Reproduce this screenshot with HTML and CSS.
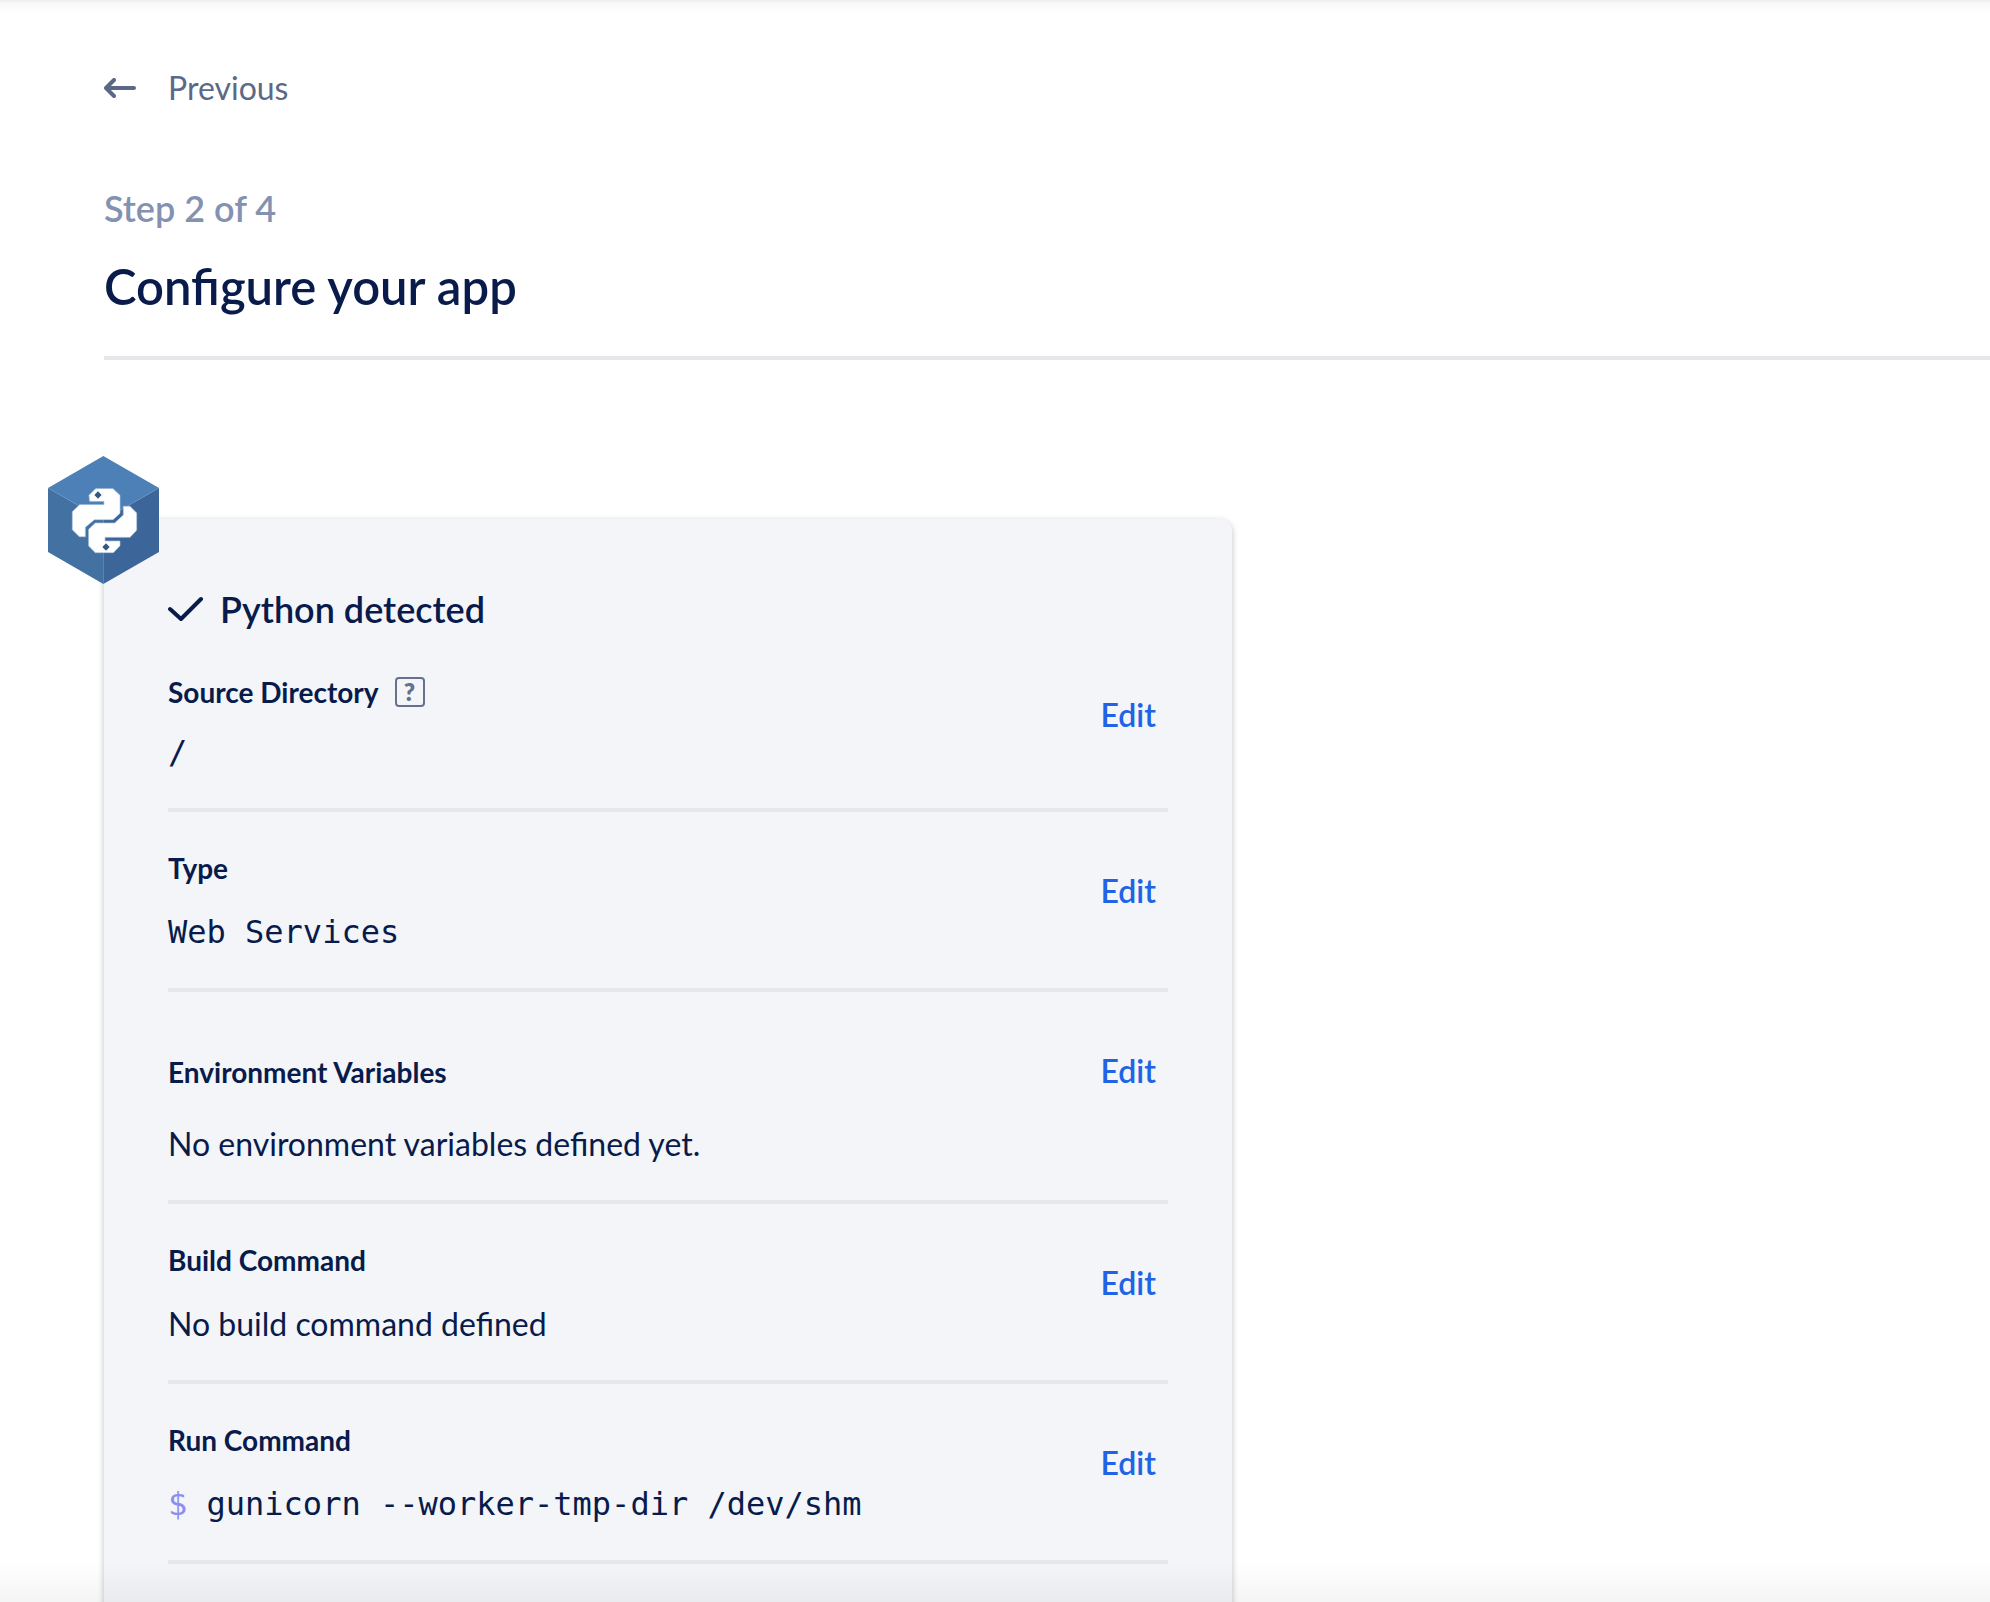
FILE: index.html
```html
<!DOCTYPE html>
<html lang="en">
<head>
<meta charset="utf-8">
<meta name="viewport" content="width=device-width, initial-scale=1">
<title>Configure your app</title>
<link rel="stylesheet" href="styles.css">
</head>
<body>
<main class="page">
  <header class="page-header">
    <a class="back" href="#">
      <svg class="back-icon" viewBox="0 0 32 20" aria-hidden="true"><path d="M10 2 2 10l8 8M2 10h28"/></svg>
      Previous
    </a>
    <p class="step">Step 2 of 4</p>
    <h1 class="title">Configure your app</h1>
  </header>

  <section class="card">
    <svg class="badge" viewBox="24 48 333 384" role="img" aria-label="Python">
      <path fill="#4372a2" d="M24 144 190 240V432L24 336z"/>
      <path fill="#3c659a" d="M357 144 190 240V432L357 336z"/>
      <path fill="#4d80b7" d="M190 48 357 144 190 240 24 144z"/>
      <g fill="#fff" stroke="#b5c9de" stroke-width="2">
        <path d="M147 166l20-20h52l21 20v54l-21 19h-56l-27 23v28h-18l-21-21v-54l22-21h73v-10h-43z"/>
        <path d="M250 199h20l20 20v52l-20 21h-75v11h45v14l-20 21h-54l-20-20v-50l20-19h58l26-24z"/>
      </g>
      <path fill="#34587f" d="M174 154l11 11-11 11-11-11zM198 310l11 11-11 11-11-11z"/>
    </svg>

    <h2 class="detected">
      <svg class="check" viewBox="0 0 36 26" aria-hidden="true"><path d="M2 13 13 23 33 3"/></svg>
      Python detected
    </h2>

    <div class="row row-first">
      <div class="info">
        <h3 class="label">Source Directory <button class="help" type="button" aria-label="About the source directory">?</button></h3>
        <p class="value mono">/</p>
      </div>
      <button class="edit" type="button">Edit</button>
    </div>

    <div class="row">
      <div class="info">
        <h3 class="label">Type</h3>
        <p class="value mono">Web Services</p>
      </div>
      <button class="edit" type="button">Edit</button>
    </div>

    <div class="row row-stacked">
      <h3 class="label">Environment Variables</h3>
      <button class="edit" type="button">Edit</button>
      <p class="value">No environment variables defined yet.</p>
    </div>

    <div class="row">
      <div class="info">
        <h3 class="label">Build Command</h3>
        <p class="value">No build command defined</p>
      </div>
      <button class="edit" type="button">Edit</button>
    </div>

    <div class="row">
      <div class="info">
        <h3 class="label">Run Command</h3>
        <p class="value mono"><span class="prompt">$</span> gunicorn --worker-tmp-dir /dev/shm</p>
      </div>
      <button class="edit" type="button">Edit</button>
    </div>
  </section>
</main>
</body>
</html>
```
FILE: styles.css
```css
* {
  box-sizing: border-box;
}

body {
  margin: 0;
  background: #fff;
  color: #081b4b;
  font-family: Lato, "Open Sans", sans-serif;
  font-size: 32px;
  line-height: 40px;
}

h1, h2, h3, p {
  margin: 0;
}

button {
  border: 0;
  background: none;
  font-family: inherit;
  cursor: pointer;
}

/* Soft shades along the top and bottom edges of the window */
body::before,
body::after {
  content: "";
  position: fixed;
  left: 0;
  right: 0;
  z-index: 1;
  pointer-events: none;
}

body::before {
  top: 0;
  height: 12px;
  border-top: 2px solid #f0f0f0;
  background: linear-gradient(#f8f8f8, #fff);
}

body::after {
  bottom: 0;
  height: 42px;
  background: linear-gradient(rgba(0, 0, 0, 0), rgba(0, 0, 0, 0.04));
}

.page {
  height: 100vh;
  overflow: hidden;
  padding: 68px 0 0 104px;
}

.page-header {
  border-bottom: 4px solid #e5e7eb;
  padding-bottom: 42px;
}

.back {
  display: flex;
  align-items: center;
  gap: 32px;
  color: #5b6987;
  text-decoration: none;
}

.back-icon {
  width: 32px;
  height: 20px;
}

.back-icon path,
.check path {
  fill: none;
  stroke: currentColor;
  stroke-width: 4;
  stroke-linecap: round;
  stroke-linejoin: round;
}

.step {
  margin-top: 80px;
  color: #8492b1;
  font-size: 36px;
  font-weight: 600;
}

.title {
  margin-top: 30px;
  font-size: 49px;
  font-weight: 600;
  line-height: 56px;
}

.card {
  position: relative;
  max-width: 1128px;
  margin-top: 159px;
  padding: 70px 64px 200px;
  border-radius: 12px;
  background: #f3f5f9;
  box-shadow: 0 2px 6px rgba(0, 0, 0, 0.25);
}

.badge {
  position: absolute;
  top: -63px;
  left: -56px;
  width: 111px;
  height: 128px;
}

.detected {
  display: flex;
  align-items: center;
  gap: 16px;
  margin-bottom: 47px;
  font-size: 36px;
  font-weight: 600;
}

.check {
  width: 36px;
  height: 26px;
}

.row {
  display: grid;
  grid-template-columns: 1fr auto;
  align-items: start;
  padding: 40px 0 36px;
  border-bottom: 4px solid #e5e7eb;
}

.info {
  display: grid;
  gap: 28px;
}

.row-first {
  padding-top: 0;
}

.row-first .info {
  gap: 24px;
}

.row-stacked {
  align-items: center;
  row-gap: 12px;
}

.label {
  display: flex;
  align-items: center;
  gap: 16px;
  font-size: 28px;
  font-weight: 700;
  line-height: 32px;
}

.help {
  width: 30px;
  height: 30px;
  padding: 0;
  border: 2px solid #64718f;
  border-radius: 4px;
  color: #64718f;
  font-size: 24px;
  font-weight: 800;
  line-height: 26px;
}

.mono {
  font-family: "DejaVu Sans Mono", "Liberation Mono", monospace;
}

.prompt {
  color: #8f8cf2;
}

.edit {
  height: 80px;
  padding: 0 12px 4px;
  color: #2063e4;
  font-size: 32px;
  font-weight: 600;
}
```
